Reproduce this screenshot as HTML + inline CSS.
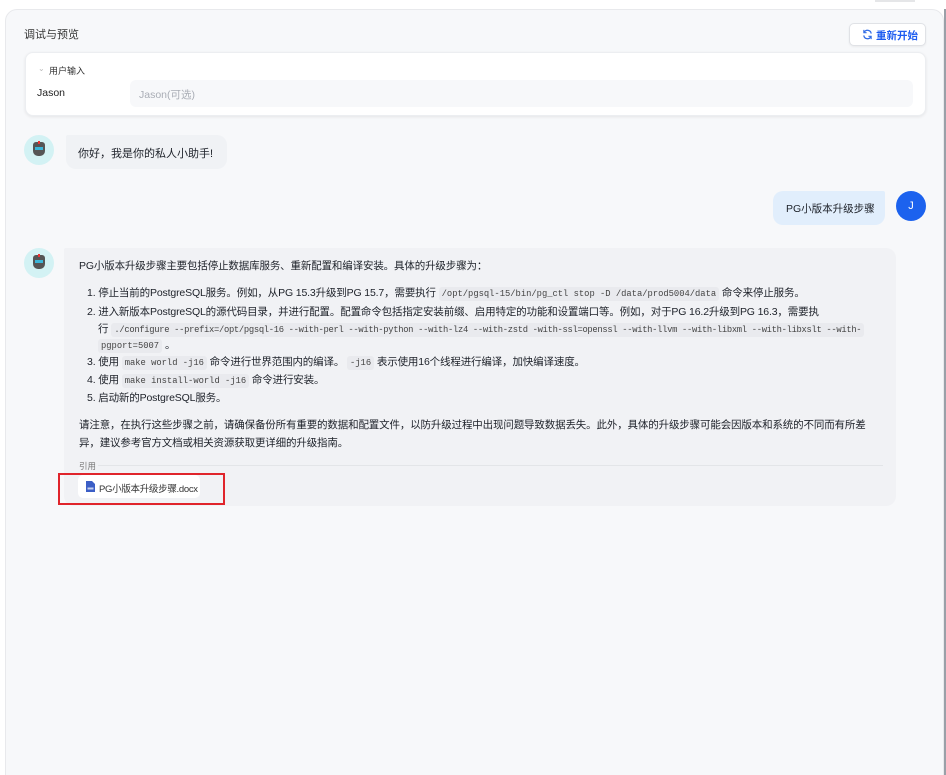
<!DOCTYPE html>
<html><head><meta charset="utf-8"><style>
*{margin:0;padding:0;box-sizing:border-box}
html,body{width:946px;height:775px;overflow:hidden}
body{background:#fff;font-family:"Liberation Sans","Noto Sans CJK SC",sans-serif;color:#1d2129;position:relative;font-size:10.5px}
.a{position:absolute;white-space:nowrap}
.t{letter-spacing:-.15px}
.panel{position:absolute;left:5px;top:9px;width:939px;height:800px;background:#f7f8fa;border:1px solid #e8e9ec;border-radius:12px}
.vline{position:absolute;left:944px;top:9px;width:2px;height:766px;background:#9aa0a8}
code{font-family:"Liberation Mono",monospace;font-size:8.8px;background:#e9eaee;border-radius:3px;padding:2px 3px;color:#444;letter-spacing:0}
.av{position:absolute;width:30px;height:30px;border-radius:50%;background:#d3f2f4}
.bot{position:absolute;left:9px;top:7px;width:12px;height:14px;background:#555;border-radius:3px 3px 5px 5px}
.bot:before{content:"";position:absolute;left:2px;top:5px;width:8px;height:3px;background:#3bb6d8}
.bot:after{content:"";position:absolute;left:5px;top:-1px;width:2px;height:3px;background:#e33}
</style></head><body>
<div class="a" style="left:875px;top:0;width:40px;height:2px;background:#e5e6e8"></div>
<div class="panel"></div>
<div class="vline"></div>
<div class="a" style="left:24px;top:26px;font-size:11px;color:#333">调试与预览</div>
<div class="a" style="left:849px;top:23px;width:77px;height:23px;background:#fff;border:1px solid #e0e2e6;border-radius:5px;box-shadow:0 1px 2px rgba(0,0,0,.06)"></div>
<svg class="a" style="left:862px;top:29px" width="11" height="11" viewBox="0 0 12 12"><path d="M10 5A4 4 0 0 0 2.5 3.5M2 7a4 4 0 0 0 7.5 1.5" fill="none" stroke="#2f6be6" stroke-width="1.4"/><path d="M2 1v3h3M10 11V8H7" fill="none" stroke="#2f6be6" stroke-width="1.2"/></svg>
<div class="a" style="left:876px;top:28px;font-size:10.5px;color:#1d5cf0;font-weight:bold">重新开始</div>
<div class="a" style="left:25px;top:52px;width:901px;height:64px;background:#fff;border:1px solid #eceef1;border-radius:8px;box-shadow:0 1px 3px rgba(0,0,0,.08)"></div>
<div class="a" style="left:38px;top:64px;font-size:8px;color:#bbb">⌄</div>
<div class="a" style="left:49px;top:64px;font-size:9px;color:#333">用户输入</div>
<div class="a" style="left:37px;top:87px;font-size:10.5px;color:#222">Jason</div>
<div class="a" style="left:130px;top:80px;width:783px;height:27px;background:#f7f8fa;border-radius:6px"></div>
<div class="a" style="left:139px;top:87px;font-size:10.5px;color:#a9adb5">Jason(可选)</div>

<div class="av" style="left:24px;top:135px"><div class="bot"></div></div>
<div class="a" style="left:66px;top:135px;width:161px;height:34px;background:#f0f2f5;border-radius:10px;border-top-left-radius:2px"></div>
<div class="a" style="left:78px;top:145px;font-size:11px">你好，我是你的私人小助手!</div>

<div class="a" style="left:773px;top:191px;width:112px;height:34px;background:#e1eefc;border-radius:10px;border-top-right-radius:2px"></div>
<div class="a" style="left:786px;top:201px;font-size:10.5px">PG小版本升级步骤</div>
<div class="a" style="left:896px;top:191px;width:30px;height:30px;border-radius:50%;background:#1c62ee;color:#fff;font-size:11px;text-align:center;line-height:30px">J</div>

<div class="av" style="left:24px;top:248px"><div class="bot"></div></div>
<div class="a" style="left:64px;top:248px;width:832px;height:258px;background:#f1f2f5;border-radius:10px;border-top-left-radius:2px"></div>
<div class="a t" style="left:79px;top:258px">PG小版本升级步骤主要包括停止数据库服务、重新配置和编译安装。具体的升级步骤为：</div>
<div class="a t" style="left:87px;top:285px">1. 停止当前的PostgreSQL服务。例如，从PG 15.3升级到PG 15.7，需要执行 <code>/opt/pgsql-15/bin/pg_ctl stop -D /data/prod5004/data</code> 命令来停止服务。</div>
<div class="a t" style="left:87px;top:304px">2. 进入新版本PostgreSQL的源代码目录，并进行配置。配置命令包括指定安装前缀、启用特定的功能和设置端口等。例如，对于PG 16.2升级到PG 16.3，需要执</div>
<div class="a" style="left:98px;top:321px">行 <code style="letter-spacing:-.3px">./configure --prefix=/opt/pgsql-16 --with-perl --with-python --with-lz4 --with-zstd -with-ssl=openssl --with-llvm --with-libxml --with-libxslt --with-</code></div>
<div class="a" style="left:98px;top:337px"><code>pgport=5007</code> 。</div>
<div class="a t" style="left:87px;top:354px">3. 使用 <code>make world -j16</code> 命令进行世界范围内的编译。 <code>-j16</code> 表示使用16个线程进行编译，加快编译速度。</div>
<div class="a t" style="left:87px;top:372px">4. 使用 <code>make install-world -j16</code> 命令进行安装。</div>
<div class="a t" style="left:87px;top:390px">5. 启动新的PostgreSQL服务。</div>
<div class="a t" style="left:79px;top:417px">请注意，在执行这些步骤之前，请确保备份所有重要的数据和配置文件，以防升级过程中出现问题导致数据丢失。此外，具体的升级步骤可能会因版本和系统的不同而有所差</div>
<div class="a t" style="left:79px;top:435px">异，建议参考官方文档或相关资源获取更详细的升级指南。</div>
<div class="a" style="left:79px;top:460px;font-size:8.5px;color:#777">引用</div>
<div class="a" style="left:98px;top:465px;width:785px;height:1px;background:#e3e5e8"></div>
<div class="a" style="left:78px;top:475px;width:122px;height:23px;background:#fff;border-radius:5px"></div>
<svg class="a" style="left:86px;top:481px" width="9" height="11" viewBox="0 0 9 11"><path d="M0 0h6l3 3v8H0z" fill="#3b5ec6"/><rect x="1.5" y="6.5" width="6" height="2" fill="#fff" opacity=".7"/></svg>
<div class="a" style="left:99px;top:481px;font-size:9.5px;color:#333;letter-spacing:-.3px">PG小版本升级步骤.docx</div>
<div class="a" style="left:58px;top:473px;width:167px;height:32px;border:2px solid #e0242b"></div>
</body></html>
